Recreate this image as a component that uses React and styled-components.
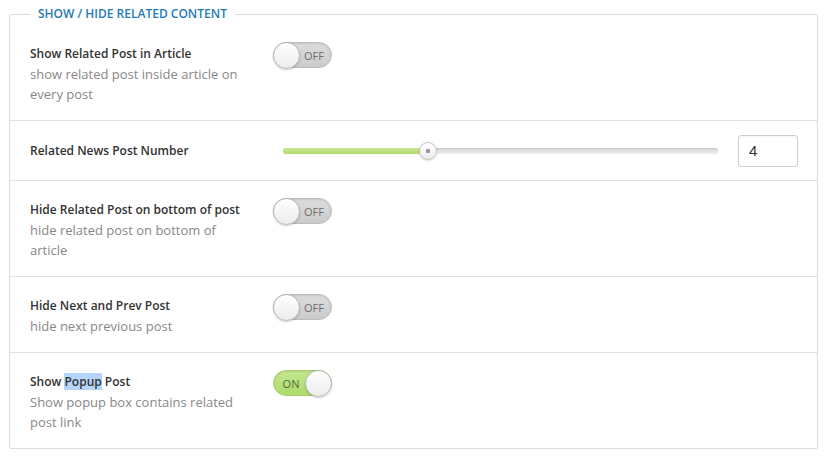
import React from 'react';
import styled, { createGlobalStyle } from 'styled-components';

const GlobalStyle = createGlobalStyle`
    html, body {
        margin: 0;
        padding: 0;
        background: #ffffff;
    }
    body {
        font-family: "Open Sans", "Liberation Sans", sans-serif;
    }
`;

const settings = [
    { type: 'toggle', title: ['Show Related Post in Article'], desc: 'show related post inside article on every post', on: false },
    { type: 'slider', title: ['Related News Post Number'], value: 4, min: 1, max: 10 },
    { type: 'toggle', title: ['Hide Related Post on bottom of post'], desc: 'hide related post on bottom of article', on: false },
    { type: 'toggle', title: ['Hide Next and Prev Post'], desc: 'hide next previous post', on: false },
    { type: 'toggle', title: ['Show ', 'Popup', ' Post'], desc: 'Show popup box contains related post link', on: true },
];

// odd parts of a title are shown as selected text
const renderTitle = (parts) => parts.map((part, j) => (
    j % 2 === 1 ? <Selected key={j}>{part}</Selected> : <React.Fragment key={j}>{part}</React.Fragment>
));

const App = () => {

    return(
        <>
            <GlobalStyle />
            <Panel>
                <Legend>Show / Hide Related Content</Legend>
                {settings.map((item, i) => (
                    item.type === 'slider' ? (
                        <SliderRow key={i}>
                            <Label>
                                <Title>{renderTitle(item.title)}</Title>
                            </Label>
                            <Track>
                                <Fill style={{ width: `${((item.value - item.min) / (item.max - item.min)) * 100}%` }}>
                                    <Thumb />
                                </Fill>
                            </Track>
                            <NumberBox>{item.value}</NumberBox>
                        </SliderRow>
                    ) : (
                        <Row key={i} $first={i === 0}>
                            <Label>
                                <Title>{renderTitle(item.title)}</Title>
                                <Desc>{item.desc}</Desc>
                            </Label>
                            <Toggle $on={item.on}>
                                {item.on ? <ToggleText $on>ON</ToggleText> : null}
                                <Knob />
                                {item.on ? null : <ToggleText>OFF</ToggleText>}
                            </Toggle>
                        </Row>
                    )
                ))}
            </Panel>
        </>
    );
};

const Panel = styled.fieldset`
    margin: 6px 10px 0 9px;
    padding: 0;
    border: 1px solid #dcdcdc;
    border-radius: 2px;
    box-shadow: 0 1px 1px rgba(0, 0, 0, 0.05);
    min-width: 0;
`;

const Legend = styled.legend`
    margin-left: 20px;
    padding: 0 8px;
    font-size: 12px;
    line-height: 16px;
    font-weight: 600;
    text-transform: uppercase;
    color: #1f7bb6;
`;

const Selected = styled.span`
    background: #b5d5fb;
`;

const Row = styled.div`
    display: flex;
    align-items: flex-start;
    padding: ${p => (p.$first ? '22px' : '19px')} 19px 16px 20px;
    border-top: ${p => (p.$first ? 'none' : '1px solid #e2e2e2')};
`;

const SliderRow = styled.div`
    display: flex;
    align-items: center;
    height: 59px;
    padding: 0 19px 0 20px;
    border-top: 1px solid #e2e2e2;
`;

const Label = styled.div`
    width: 243px;
    flex-shrink: 0;
`;

const Title = styled.div`
    font-size: 12px;
    line-height: 20px;
    font-weight: 600;
    color: #333333;
`;

const Desc = styled.div`
    font-size: 13px;
    line-height: 20px;
    color: #888888;
    padding-right: 20px;
`;

const Toggle = styled.div`
    display: flex;
    align-items: center;
    justify-content: space-between;
    box-sizing: border-box;
    width: 59px;
    height: 26px;
    margin-top: -2px;
    border-radius: 13px;
    border: 1px solid ${p => (p.$on ? '#a6cf68' : '#bdbdbd')};
    background: ${p => (p.$on
        ? 'linear-gradient(#c4e790, #addb6c)'
        : 'linear-gradient(#dcdcdc, #cbcbcb)')};
    box-shadow: inset 0 1px 2px rgba(0, 0, 0, 0.1);
`;

const Knob = styled.div`
    box-sizing: border-box;
    width: 27px;
    height: 27px;
    margin: -1px;
    border-radius: 50%;
    border: 1px solid #b8b8b8;
    background: linear-gradient(#ffffff, #ececec);
    box-shadow: 0 1px 2px rgba(0, 0, 0, 0.2);
`;

const ToggleText = styled.span`
    flex: 1;
    text-align: center;
    font-size: 11px;
    color: ${p => (p.$on ? '#56683f' : '#6e6e6e')};
    padding-${p => (p.$on ? 'left' : 'right')}: 2px;
`;

const Track = styled.div`
    flex: 1;
    height: 6px;
    margin: 0 20px 0 10px;
    border-radius: 3px;
    background: linear-gradient(#d6d6d6, #ececec);
    box-shadow: inset 0 1px 1px rgba(0, 0, 0, 0.08);
`;

const Fill = styled.div`
    position: relative;
    height: 100%;
    border-radius: 3px;
    background: linear-gradient(#c8e88f, #b0d96f);
`;

const Thumb = styled.div`
    position: absolute;
    right: -9px;
    top: -6px;
    box-sizing: border-box;
    width: 18px;
    height: 18px;
    border-radius: 50%;
    border: 1px solid #c4c4c4;
    background: radial-gradient(circle, #9a9a9a 0 2px, transparent 2.5px), linear-gradient(#ffffff, #ececec);
    box-shadow: 0 1px 2px rgba(0, 0, 0, 0.15);
`;

const NumberBox = styled.div`
    box-sizing: border-box;
    width: 60px;
    height: 32px;
    padding: 0 10px;
    border: 1px solid #cfcfcf;
    border-radius: 3px;
    font-family: "Liberation Sans", Arial, sans-serif;
    font-size: 15px;
    line-height: 30px;
    color: #333333;
    box-shadow: inset 0 1px 1px rgba(0, 0, 0, 0.04);
`;

export default App;
